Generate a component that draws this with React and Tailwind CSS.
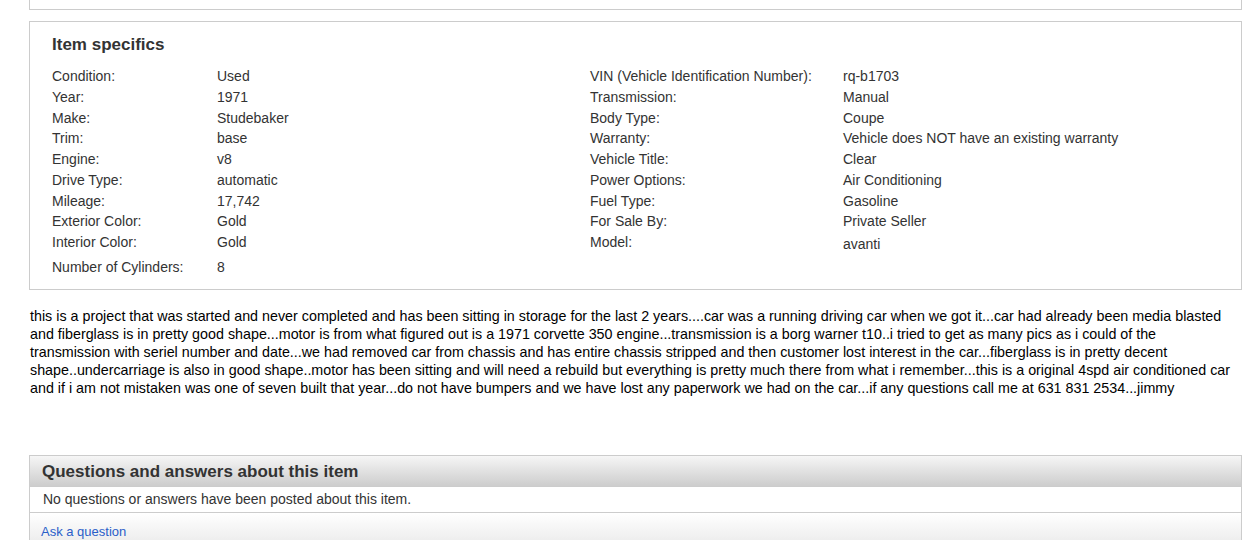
const LEFT = [
  ['Condition:', 'Used'],
  ['Year:', '1971'],
  ['Make:', 'Studebaker'],
  ['Trim:', 'base'],
  ['Engine:', 'v8'],
  ['Drive Type:', 'automatic'],
  ['Mileage:', '17,742'],
  ['Exterior Color:', 'Gold'],
  ['Interior Color:', 'Gold'],
]

const RIGHT = [
  ['VIN (Vehicle Identification Number):', 'rq-b1703'],
  ['Transmission:', 'Manual'],
  ['Body Type:', 'Coupe'],
  ['Warranty:', 'Vehicle does NOT have an existing warranty'],
  ['Vehicle Title:', 'Clear'],
  ['Power Options:', 'Air Conditioning'],
  ['Fuel Type:', 'Gasoline'],
  ['For Sale By:', 'Private Seller'],
  ['Model:', 'avanti'],
]

const DESC =
  'this is a project that was started and never completed and has been sitting in storage for the last 2 years....car was a running driving car when we got it...car had already been media blasted and fiberglass is in pretty good shape...motor is from what figured out is a 1971 corvette 350 engine...transmission is a borg warner t10..i tried to get as many pics as i could of the transmission with seriel number and date...we had removed car from chassis and has entire chassis stripped and then customer lost interest in the car...fiberglass is in pretty decent shape..undercarriage is also in good shape..motor has been sitting and will need a rebuild but everything is pretty much there from what i remember...this is a original 4spd air conditioned car and if i am not mistaken was one of seven built that year...do not have bumpers and we have lost any paperwork we had on the car...if any questions call me at 631 831 2534...jimmy'

function SpecRow({ label, value, labelW, last }) {
  return (
    <div className="flex leading-[20.75px]">
      <div className="shrink-0" style={{ width: labelW }}>
        {label}
      </div>
      <div className={last ? 'mt-[2px]' : ''}>{value}</div>
    </div>
  )
}

export default function App() {
  return (
    <div className="min-h-[540px] bg-white font-['Liberation_Sans',Arial,sans-serif] text-[#333]">
      <div className="ml-[29px] h-[10px] w-[1213px] border-x border-b border-[#ccc]" />

      <div className="ml-[29px] mt-[11px] w-[1213px] border border-[#ccc] pb-[11px] pl-[22px] pt-[13px]">
        <h2 className="text-[17px] font-bold leading-[20px] text-[#333]">Item specifics</h2>
        <div className="mt-[11px] flex text-[14px]">
          <div className="w-[538px]">
            {LEFT.map(([l, v]) => (
              <SpecRow key={l} label={l} value={v} labelW={165} />
            ))}
          </div>
          <div>
            {RIGHT.map(([l, v], i) => (
              <SpecRow key={l} label={l} value={v} labelW={253} last={i === RIGHT.length - 1} />
            ))}
          </div>
        </div>
        <div className="mt-[2px] text-[14px]">
          <SpecRow label="Number of Cylinders:" value="8" labelW={165} />
        </div>
      </div>

      <p className="ml-[30px] mt-[17px] w-[1204px] text-[14.3px] leading-[18px] text-black">{DESC}</p>

      <div className="ml-[29px] mt-[58px] w-[1213px] border border-[#ccc]">
        <div className="h-[31px] border-b border-[#ccc] bg-gradient-to-b from-[#f6f6f6] to-[#cdcdcd] pl-[12px] text-[17px] font-bold leading-[31px] text-[#333]">
          Questions and answers about this item
        </div>
        <div className="h-[26px] border-b border-[#ccc] pl-[13px] text-[14px] leading-[24px] text-[#333]">
          No questions or answers have been posted about this item.
        </div>
        <div className="h-[30px] bg-gradient-to-b from-white to-[#ececec] pl-[11px] pt-[10px] text-[13px] leading-[18px]">
          <a href="#" className="text-[#2a5ec9]">
            Ask a question
          </a>
        </div>
      </div>
    </div>
  )
}
